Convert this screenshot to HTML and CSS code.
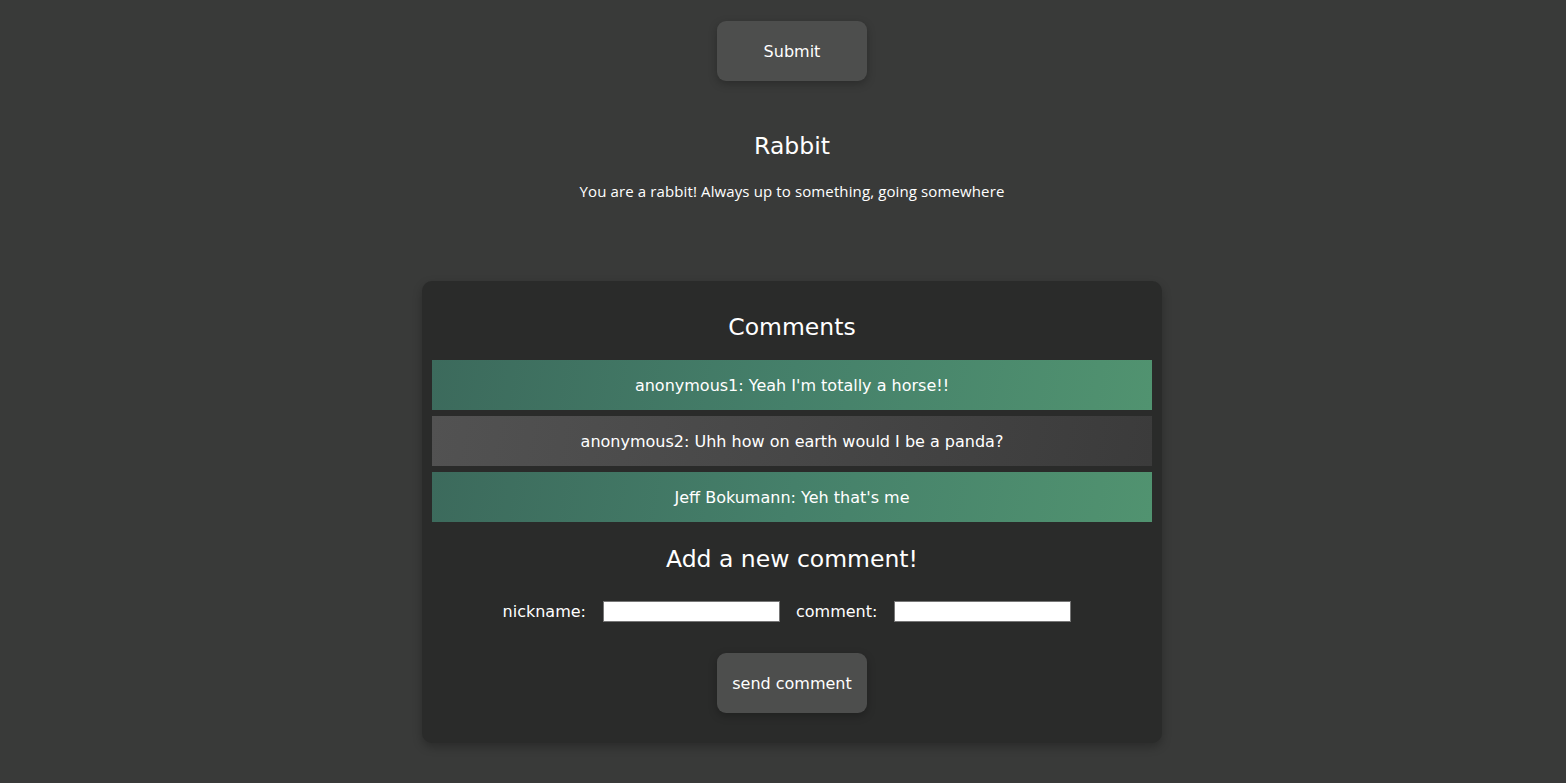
FILE: index.html
```html
<!DOCTYPE html>
<html>
<head>
<meta charset="utf-8">
<link rel="stylesheet" href="styles.css">
</head>
<body>
<main class="page">
  <button class="btn btn-submit">Submit</button>
  <section class="animal">
    <h2 class="animal-title">Rabbit</h2>
    <p class="animal-desc">You are a rabbit! Always up to something, going somewhere</p>
  </section>
  <section class="card">
    <h2 class="card-title">Comments</h2>
    <div class="comment-list">
      <div class="comment comment-green">anonymous1: Yeah I'm totally a horse!!</div>
      <div class="comment comment-gray">anonymous2: Uhh how on earth would I be a panda?</div>
      <div class="comment comment-green">Jeff Bokumann: Yeh that's me</div>
    </div>
    <h2 class="card-title add-title">Add a new comment!</h2>
    <form class="form-row">
      <label class="field-label">nickname:</label>
      <input class="field-input" type="text">
      <label class="field-label">comment:</label>
      <input class="field-input" type="text">
    </form>
    <button class="btn btn-send">send comment</button>
  </section>
</main>
</body>
</html>
```
FILE: styles.css
```css
html, body {
  margin: 0;
  padding: 0;
}
body {
  background: #393a39;
  color: #ffffff;
  font-family: "DejaVu Sans", Verdana, sans-serif;
  min-height: 783px;
}
.page {
  display: flex;
  flex-direction: column;
  align-items: center;
  padding: 21px 0 0 18px;
}
.btn {
  width: 150px;
  height: 60px;
  border: none;
  border-radius: 9px;
  background: #4d4e4d;
  color: #ffffff;
  font-family: "DejaVu Sans", Verdana, sans-serif;
  font-size: 16px;
  padding-top: 2px;
  box-shadow: 0 3px 8px rgba(0, 0, 0, 0.25);
  cursor: pointer;
}
.animal {
  display: flex;
  flex-direction: column;
  align-items: center;
  margin-top: 49px;
}
.animal-title {
  margin: 0;
  font-size: 23.5px;
  font-weight: normal;
  line-height: 32px;
}
.animal-desc {
  margin: 19px 0 0;
  font-family: "Open Sans", "Noto Sans", sans-serif;
  font-size: 15px;
  letter-spacing: 0.12px;
  line-height: 20px;
}
.card {
  margin-top: 80px;
  width: 740px;
  box-sizing: border-box;
  padding: 29px 10px 30px;
  background: #2a2b2a;
  border-radius: 10px;
  box-shadow: 0 4px 10px rgba(0, 0, 0, 0.25);
  display: flex;
  flex-direction: column;
  align-items: center;
}
.card-title {
  margin: 0;
  font-size: 23.5px;
  font-weight: normal;
  line-height: 34px;
}
.comment-list {
  margin-top: 16px;
  width: 100%;
  display: flex;
  flex-direction: column;
  gap: 6px;
}
.comment {
  height: 50px;
  display: flex;
  align-items: center;
  justify-content: center;
  font-size: 16px;
}
.comment-green {
  background: linear-gradient(100deg, #3c6a5c 0%, #45806a 50%, #519370 100%);
}
.comment-gray {
  background: linear-gradient(100deg, #525252 0%, #474747 50%, #3b3b3b 100%);
}
.add-title {
  margin-top: 20px;
}
.form-row {
  margin: 25px 0 0;
  display: flex;
  align-items: center;
  padding-left: 6px;
}
.field-label {
  font-size: 16px;
  margin-right: 17px;
}
.field-input {
  width: 177px;
  height: 21px;
  box-sizing: border-box;
  border: 1px solid #767676;
  background: #ffffff;
  margin: 0 16px 0 0;
  padding: 1px 2px;
}
.btn-send {
  margin-top: 31px;
}
```
